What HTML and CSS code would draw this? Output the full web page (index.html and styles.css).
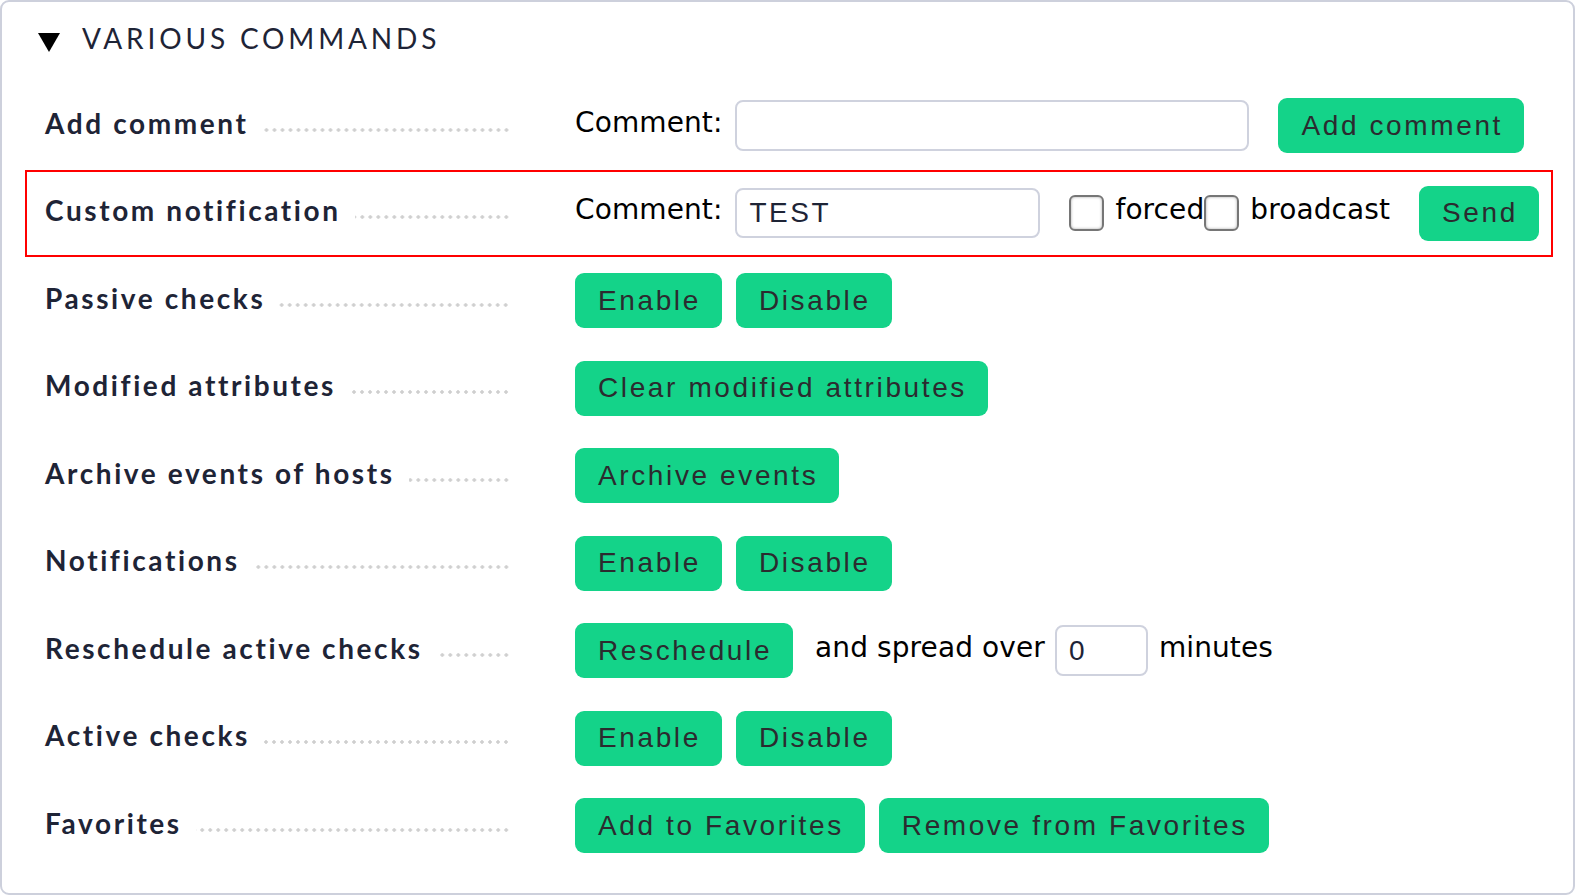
FILE: index.html
```html
<!DOCTYPE html>
<html lang="en">
<head>
<meta charset="utf-8">
<title>Various commands</title>
<link rel="stylesheet" href="styles.css">
</head>
<body>
<div class="box">
  <div class="header">
    <svg class="tri" width="22" height="19" viewBox="0 0 22 19"><polygon points="0,0 22,0 11,19" fill="#000"/></svg>
    <span class="title">VARIOUS COMMANDS</span>
  </div>
  <div class="rows">
    <div class="row">
      <div class="label"><span class="ltext">Add comment</span><span class="dots"></span></div>
      <div class="content">
        <span class="txt">Comment:</span>
        <input class="field w-long" type="text" value="">
        <button class="btn push">Add comment</button>
      </div>
    </div>
    <div class="row marked">
      <div class="label"><span class="ltext">Custom notification</span><span class="dots"></span></div>
      <div class="content">
        <span class="txt">Comment:</span>
        <input class="field w-mid" type="text" value="TEST">
        <input class="cb push" type="checkbox"><span class="txt cbl">forced</span>
        <input class="cb" type="checkbox"><span class="txt cbl">broadcast</span>
        <button class="btn push">Send</button>
      </div>
    </div>
    <div class="row">
      <div class="label"><span class="ltext">Passive checks</span><span class="dots"></span></div>
      <div class="content">
        <button class="btn">Enable</button><button class="btn">Disable</button>
      </div>
    </div>
    <div class="row">
      <div class="label"><span class="ltext">Modified attributes</span><span class="dots"></span></div>
      <div class="content">
        <button class="btn">Clear modified attributes</button>
      </div>
    </div>
    <div class="row">
      <div class="label"><span class="ltext">Archive events of hosts</span><span class="dots"></span></div>
      <div class="content">
        <button class="btn">Archive events</button>
      </div>
    </div>
    <div class="row">
      <div class="label"><span class="ltext">Notifications</span><span class="dots"></span></div>
      <div class="content">
        <button class="btn">Enable</button><button class="btn">Disable</button>
      </div>
    </div>
    <div class="row">
      <div class="label"><span class="ltext">Reschedule active checks</span><span class="dots"></span></div>
      <div class="content">
        <button class="btn">Reschedule</button>
        <span class="txt spread">and spread over</span>
        <input class="field w-short" type="text" value="0">
        <span class="txt">minutes</span>
      </div>
    </div>
    <div class="row">
      <div class="label"><span class="ltext">Active checks</span><span class="dots"></span></div>
      <div class="content">
        <button class="btn">Enable</button><button class="btn">Disable</button>
      </div>
    </div>
    <div class="row">
      <div class="label"><span class="ltext">Favorites</span><span class="dots"></span></div>
      <div class="content">
        <button class="btn">Add to Favorites</button><button class="btn">Remove from Favorites</button>
      </div>
    </div>
  </div>
</div>
</body>
</html>
```
FILE: styles.css
```css
html, body {
  margin: 0;
  padding: 0;
  background: #fff;
}

.box {
  width: 1575px;
  height: 895px;
  box-sizing: border-box;
  border: 2px solid #cdd0dc;
  border-radius: 9px;
  overflow: hidden;
}

.header {
  height: 80px;
  display: flex;
  align-items: center;
  padding-left: 36px;
  box-sizing: border-box;
  padding-bottom: 8px;
}

.tri {
  display: block;
  margin-top: 8px;
}

.title {
  margin-left: 22px;
  font-family: Lato, "Liberation Sans", sans-serif;
  font-size: 28px;
  letter-spacing: 3.85px;
  color: #1e2436;
}

.rows {
  padding: 0 20px 0 23px;
}

.row {
  height: 87.5px;
  display: flex;
  align-items: center;
  padding-left: 20px;
  box-sizing: border-box;
}

.row.marked {
  border: 2px solid #ff0000;
  padding-left: 18px;
  width: 1528px;
}

.label {
  width: 465px;
  display: flex;
  align-items: baseline;
  padding-bottom: 6px;
  flex: none;
}

.ltext {
  font-family: Lato, "Liberation Sans", sans-serif;
  font-weight: 700;
  font-size: 28px;
  letter-spacing: 2.6px;
  color: #1e2436;
  white-space: nowrap;
}

.dots {
  flex: 1;
  height: 6px;
  margin-left: 14px;
  background-image: radial-gradient(circle, #cfcfcf 1.5px, rgba(255,255,255,0) 1.9px);
  background-size: 8px 4px;
  background-position: right 0;
  background-repeat: repeat-x;
}

.content {
  margin-left: 65px;
  display: flex;
  align-items: center;
}

.txt {
  font-family: "DejaVu Sans", sans-serif;
  font-size: 28px;
  letter-spacing: 0.1px;
  color: #000;
  white-space: nowrap;
  padding-bottom: 7px;
}

.field {
  margin: 0 0 0 13px;
  height: 51px;
  box-sizing: border-box;
  border: 2px solid #cfd2de;
  border-radius: 8px;
  padding: 0 12px;
  font-family: "Liberation Sans", Arial, sans-serif;
  font-size: 28px;
  letter-spacing: 2.5px;
  color: #1e2436;
  background: #fff;
  outline: none;
}

.w-long { width: 514px; }
.w-mid { width: 305px; height: 50px; }
.w-short { width: 93px; margin-left: 10px; margin-right: 11px; }

.spread { margin-left: 8px; }

.btn {
  height: 55px;
  margin: 0 14px 0 0;
  padding: 0 21px 0 23px;
  border: none;
  border-radius: 9px;
  background: #14d389;
  color: #2b2b2f;
  font-family: "Liberation Sans", Arial, sans-serif;
  font-size: 28px;
  letter-spacing: 2.62px;
  white-space: nowrap;
  cursor: pointer;
}

.push { margin-left: 29px; }

.cb {
  appearance: none;
  -webkit-appearance: none;
  width: 35px;
  height: 36px;
  margin: 0;
  border: 2px solid #767676;
  border-radius: 6px;
  background: #fff;
  box-shadow: inset 0 0 3px rgba(0, 0, 0, 0.35);
  box-sizing: border-box;
  flex: none;
}

.cb.push { margin-left: 29px; }

.cbl { margin-left: 11px; }
```
